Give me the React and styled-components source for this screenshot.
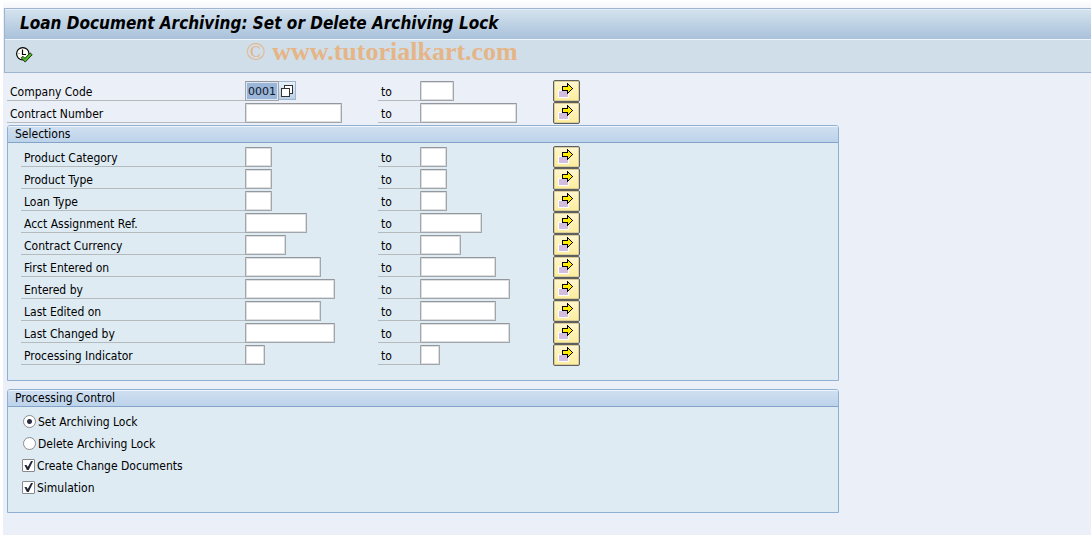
import React from 'react'
import styled, { createGlobalStyle } from 'styled-components'

const topFields = [
  { id: 'company', label: 'Company Code', width: 34, value: '0001', help: true },
  { id: 'contract', label: 'Contract Number', width: 97 },
]

const selectionFields = [
  { id: 'category', label: 'Product Category', width: 27 },
  { id: 'type', label: 'Product Type', width: 27 },
  { id: 'loan', label: 'Loan Type', width: 27 },
  { id: 'acct', label: 'Acct Assignment Ref.', width: 62 },
  { id: 'currency', label: 'Contract Currency', width: 41 },
  { id: 'entered-on', label: 'First Entered on', width: 76 },
  { id: 'entered-by', label: 'Entered by', width: 90 },
  { id: 'edited-on', label: 'Last Edited on', width: 76 },
  { id: 'changed-by', label: 'Last Changed by', width: 90 },
  { id: 'indicator', label: 'Processing Indicator', width: 20 },
]

const ExecuteIcon = () => (
  <svg width="17" height="16" viewBox="0 0 17 16" aria-hidden="true">
    <circle cx="6.8" cy="6.8" r="6.2" fill="#fffef4" stroke="#000" strokeWidth="1.2" />
    <path d="M6.5 2.5V7.5H10" fill="none" stroke="#000" strokeWidth="1.2" />
    <path d="M2.5 6.5h1M6.5 10.5v1" stroke="#777" />
    <path d="M5.2 10.8L7 9.3L9 11.3L14 5.9L16.2 7.7L9.2 15.1Z" fill="#55b82a" stroke="#12330a" strokeWidth="0.9" />
  </svg>
)

const ArrowIcon = () => (
  <svg width="15" height="15" viewBox="0 0 15 15" shapeRendering="crispEdges" aria-hidden="true">
    <path d="M0 7h11v8H0z" fill="#fff" />
    <path d="M1 8h9v6H1z" fill="#d3bedf" />
    <path d="M4 3H9V0H10V1H11V2H12V3H13V4H14V5H15V6H14V7H13V8H12V9H11V10H10V11H9V8H4Z" fill="#000" />
    <path d="M5 4H10V2H11V3H12V4H13V5H14V6H13V7H12V8H11V9H10V7H5Z" fill="#ffeb00" />
  </svg>
)

const HelpIcon = () => (
  <svg width="12" height="12" viewBox="0 0 12 12" shapeRendering="crispEdges" aria-hidden="true">
    <path d="M3.5 0.5h8v8h-8z" fill="#fff" stroke="#333" />
    <path d="M0.5 3.5h8v8h-8z" fill="#fff" stroke="#333" />
  </svg>
)

const Field = ({ id, label, width, value, help }) => (
  <Row>
    <Label htmlFor={id}>{label}</Label>
    <Cell>
      <TextBox id={id} $width={width} $selected={!!value} defaultValue={value} />
      {help && <HelpButton type="button" aria-label="Possible entries"><HelpIcon /></HelpButton>}
    </Cell>
    <Label htmlFor={id + '-to'}>to</Label>
    <Cell>
      <TextBox id={id + '-to'} $width={width} />
    </Cell>
    <MoreButton type="button" aria-label={'Multiple selection ' + label}><ArrowIcon /></MoreButton>
  </Row>
)

const App = () => {
  return (
    <Page>
      <GlobalStyle />
      <Header>
        <TitleBar>
          <Title>Loan Document Archiving: Set or Delete Archiving Lock</Title>
        </TitleBar>
        <Toolbar>
          <ToolButton type="button" aria-label="Execute"><ExecuteIcon /></ToolButton>
          <Watermark>© <b>www.tutorialkart.com</b></Watermark>
        </Toolbar>
      </Header>
      <Content>
        <Fields>
          {topFields.map((f) => <Field key={f.id} {...f} />)}
        </Fields>
        <Group>
          <GroupTitle>Selections</GroupTitle>
          <GroupBody>
            {selectionFields.map((f) => <Field key={f.id} {...f} />)}
          </GroupBody>
        </Group>
        <Group>
          <GroupTitle>Processing Control</GroupTitle>
          <GroupBody>
            <Option><Radio name="lock" defaultChecked />Set Archiving Lock</Option>
            <Option><Radio name="lock" />Delete Archiving Lock</Option>
            <Option><Check defaultChecked />Create Change Documents</Option>
            <Option><Check defaultChecked />Simulation</Option>
          </GroupBody>
        </Group>
      </Content>
    </Page>
  )
}

export default App

const GlobalStyle = createGlobalStyle`
  * {
    box-sizing: border-box;
  }
  body {
    margin: 0;
    background: #fff;
    font-family: "DejaVu Sans Condensed", "Noto Sans", sans-serif;
    font-size: 12px;
    color: #000;
  }
  button, input {
    font: inherit;
    margin: 0;
    padding: 0;
  }
`
const Page = styled.div`
  min-height: 100vh;
  margin-left: 3px;
  padding: 8px 0 0 1px;
  background: linear-gradient(#fff, #f4f6fa 8px, #ebf0f8 8px);
`
const Header = styled.header`
  border: 1px solid #9fb5cf;
  border-right: none;
`
const TitleBar = styled.div`
  display: flex;
  align-items: center;
  height: 30px;
  padding: 0 15px 4px;
  border-top: 1px solid #e6eff7;
  background: linear-gradient(#d3e2ee, #a9c1da);
`
const Title = styled.h1`
  margin: 0;
  font-size: 17px;
  line-height: 20px;
  font-weight: bold;
  font-style: italic;
  white-space: nowrap;
`
const Toolbar = styled.div`
  display: flex;
  align-items: center;
  height: 33px;
  padding-left: 11px;
  border-top: 1px solid #edf4fa;
  background: #d0dee9;
`
const ToolButton = styled.button`
  display: flex;
  padding-bottom: 2px;
  border: none;
  background: none;
`
const Watermark = styled.div`
  margin: 0 0 8px 213px;
  font-family: "Liberation Serif", serif;
  font-size: 26px;
  line-height: 24px;
  color: #e6b587;
  white-space: nowrap;
`
const Content = styled.main`
  max-width: 835px;
  padding: 7px 0 22px 3px;
`
const Fields = styled.div`
  margin-bottom: 1px;
`
const Row = styled.div`
  display: flex;
  height: 22px;
`
const Label = styled.label`
  flex: none;
  width: 42px;
  height: 21px;
  padding: 2px 0 0 3px;
  border-bottom: 1px solid #b5babd;
  line-height: 20px;
  white-space: nowrap;
  &:first-child {
    width: 238px;
  }
`
const Cell = styled.div`
  display: flex;
  flex: none;
  width: 133px;
  padding-top: 1px;
`
const TextBox = styled.input`
  width: ${(p) => p.$width}px;
  height: 20px;
  padding: 0 2px;
  border: 1px solid #a2a5a9;
  border-top-color: #94979b;
  border-radius: 1px;
  outline: none;
  background: ${(p) => (p.$selected ? '#9bb6d8' : '#fff')};
  box-shadow: inset 0 0 0 1px ${(p) => (p.$selected ? '#dde7f2' : '#dcdee0')};
  font-family: "DejaVu Sans", sans-serif;
  font-size: 11px;
  color: #10182c;
`
const HelpButton = styled.button`
  display: flex;
  align-items: center;
  justify-content: center;
  width: 17px;
  height: 19px;
  border: 1px solid #9fb4cd;
  border-left: none;
  background: linear-gradient(#e8f1f9, #b9cfe6);
`
const MoreButton = styled.button`
  display: flex;
  width: 27px;
  height: 22px;
  padding: 2px 0 0 4px;
  border: 1px solid #5f5f5f;
  border-radius: 2px;
  background: linear-gradient(#fff6cf, #fdec9c);
  box-shadow: inset 0 0 0 1px #d9cd9a;
`
const Group = styled.section`
  margin-bottom: 8px;
  border: 1px solid #8fb0d2;
  border-radius: 3px 3px 0 0;
  background: #deebf3;
  &:last-child {
    margin-bottom: 0;
  }
`
const GroupTitle = styled.h2`
  height: 17px;
  margin: 0;
  padding-left: 7px;
  border-top: 1px solid #eef5fb;
  border-bottom: 1px solid #84a3c8;
  border-radius: 2px 2px 0 0;
  background: linear-gradient(#cfdff0, #bcd3ea);
  font-size: 12px;
  font-weight: normal;
  line-height: 15px;
`
const GroupBody = styled.div`
  padding: 3px 0 14px 13px;
  ${Label}:first-child {
    width: 224px;
  }
`
const Option = styled.label`
  display: flex;
  align-items: center;
  gap: 2px;
  height: 22px;
  padding: 1px 0 0 1px;
`
const Radio = styled.input.attrs({ type: 'radio' })`
  appearance: none;
  width: 13px;
  height: 13px;
  margin-left: 1px;
  border: 1px solid #8a8d92;
  border-radius: 50%;
  background: #fff;
  &:checked {
    background: radial-gradient(circle, #2b2d45 2px, #fff 3px);
  }
`
const Check = styled.input.attrs({ type: 'checkbox' })`
  appearance: none;
  display: grid;
  place-items: center;
  width: 13px;
  height: 13px;
  border: 1px solid #85888d;
  border-radius: 1px;
  background: #fff;
  &:checked::before {
    content: "";
    width: 9px;
    height: 9px;
    background: #23263c;
    clip-path: polygon(5% 45%, 28% 45%, 42% 68%, 78% 0, 100% 0, 52% 100%, 32% 100%);
  }
`
